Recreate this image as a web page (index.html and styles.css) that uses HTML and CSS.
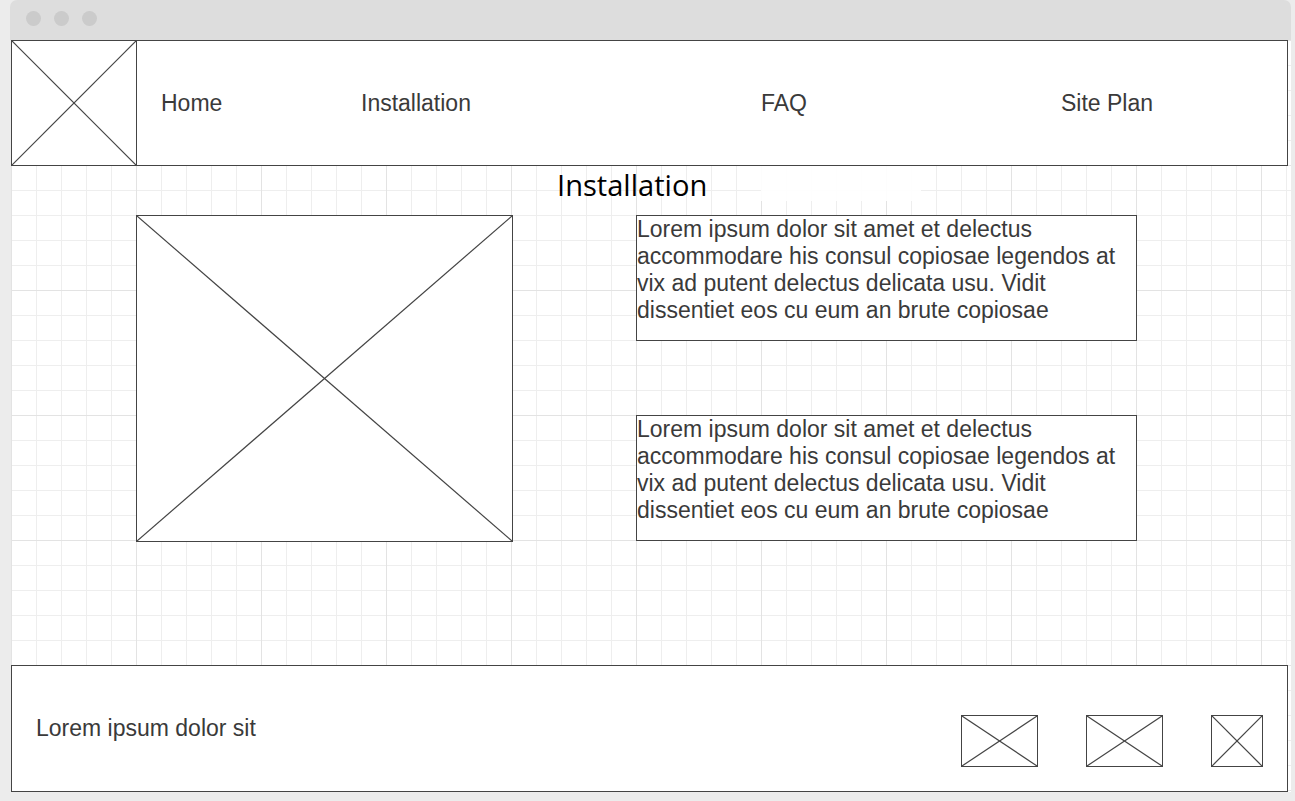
FILE: index.html
```html
<!DOCTYPE html>
<html>
<head>
<meta charset="utf-8">
<link rel="stylesheet" href="styles.css">
</head>
<body>
<div class="window">
  <div class="topbar">
    <span class="dot"></span><span class="dot"></span><span class="dot"></span>
  </div>
  <div class="canvas">
    <header class="header">
      <div class="logo">
        <svg class="xbox" viewBox="0 0 100 100" preserveAspectRatio="none"><line x1="0" y1="0" x2="100" y2="100"/><line x1="100" y1="0" x2="0" y2="100"/></svg>
      </div>
      <nav class="nav">
        <a class="nav-item nav-home">Home</a>
        <a class="nav-item nav-install">Installation</a>
        <a class="nav-item nav-faq">FAQ</a>
        <a class="nav-item nav-plan">Site Plan</a>
      </nav>
    </header>
    <main class="main">
      <div class="heading-row">
        <h1 class="heading">Installation</h1>
        <div class="heading-blank"></div>
      </div>
      <div class="content">
        <div class="image-box">
          <svg class="xbox" viewBox="0 0 100 100" preserveAspectRatio="none"><line x1="0" y1="0" x2="100" y2="100"/><line x1="100" y1="0" x2="0" y2="100"/></svg>
        </div>
        <div class="text-col">
          <div class="text-box"><p>Lorem ipsum dolor sit amet et delectus accommodare his consul copiosae legendos at vix ad putent delectus delicata usu. Vidit dissentiet eos cu eum an brute copiosae</p></div>
          <div class="text-box"><p>Lorem ipsum dolor sit amet et delectus accommodare his consul copiosae legendos at vix ad putent delectus delicata usu. Vidit dissentiet eos cu eum an brute copiosae</p></div>
        </div>
      </div>
    </main>
    <footer class="footer">
      <p class="footer-text">Lorem ipsum dolor sit</p>
      <div class="footer-icons">
        <div class="icon icon-wide"><svg class="xbox" viewBox="0 0 100 100" preserveAspectRatio="none"><line x1="0" y1="0" x2="100" y2="100"/><line x1="100" y1="0" x2="0" y2="100"/></svg></div>
        <div class="icon icon-wide"><svg class="xbox" viewBox="0 0 100 100" preserveAspectRatio="none"><line x1="0" y1="0" x2="100" y2="100"/><line x1="100" y1="0" x2="0" y2="100"/></svg></div>
        <div class="icon icon-square"><svg class="xbox" viewBox="0 0 100 100" preserveAspectRatio="none"><line x1="0" y1="0" x2="100" y2="100"/><line x1="100" y1="0" x2="0" y2="100"/></svg></div>
      </div>
    </footer>
  </div>
</div>
</body>
</html>
```
FILE: styles.css
```css
* { box-sizing: border-box; }
html, body { margin: 0; padding: 0; }
body {
  background: #ececec;
  width: 1295px;
  height: 801px;
  overflow: hidden;
  font-family: "Liberation Sans", Arial, sans-serif;
  color: #3a3a3a;
}
.window {
  margin-left: 10px;
  width: 1281px;
}
.topbar {
  height: 40px;
  background: #dddddd;
  border-radius: 7px 7px 0 0;
  display: flex;
  align-items: center;
  gap: 13px;
  padding-left: 16px;
  padding-bottom: 4px;
}
.dot {
  width: 15px;
  height: 15px;
  border-radius: 50%;
  background: #cbcbcb;
}
.canvas {
  margin-left: 1px;
  width: 1280px;
  height: 752px;
  background-color: #fff;
  background-image:
    linear-gradient(to right, #e3e3e3 1px, transparent 1px),
    linear-gradient(to bottom, #e3e3e3 1px, transparent 1px),
    linear-gradient(to right, #eeeeee 1px, transparent 1px),
    linear-gradient(to bottom, #eeeeee 1px, transparent 1px);
  background-size: 125px 125px, 125px 125px, 25px 25px, 25px 25px;
  display: flex;
  flex-direction: column;
}
.xbox {
  display: block;
  width: 100%;
  height: 100%;
}
.xbox line {
  stroke: #444;
  stroke-width: 1.2;
  vector-effect: non-scaling-stroke;
}
.header {
  width: 1277px;
  height: 126px;
  border: 1px solid #444;
  background: #fff;
  display: flex;
  flex-shrink: 0;
}
.logo {
  width: 126px;
  height: 126px;
  margin: -1px 0 0 -1px;
  border: 1px solid #444;
  flex-shrink: 0;
}
.nav {
  display: flex;
  align-items: center;
  padding-left: 24px;
  padding-top: 1px;
  font-size: 23px;
  line-height: 27px;
}
.nav-item { display: block; color: #3a3a3a; }
.nav-home { width: 200px; }
.nav-install { width: 400px; }
.nav-faq { width: 300px; }
.main {
  height: 499px;
  flex-shrink: 0;
}
.heading-row {
  height: 49px;
  display: flex;
  padding-left: 546px;
}
.heading {
  margin: 0;
  padding-top: 4px;
  font-family: "Open Sans", "Noto Sans", sans-serif;
  font-weight: 400;
  font-size: 29.1px;
  line-height: 30px;
  color: #000;
}
.heading-blank {
  margin-left: 54px;
  width: 160px;
  height: 35px;
  background: rgba(255,255,255,0.9);
}
.content {
  display: flex;
  padding-left: 125px;
  gap: 123px;
}
.image-box {
  width: 377px;
  height: 327px;
  border: 1px solid #444;
  background: #fff;
}
.text-col {
  display: flex;
  flex-direction: column;
  gap: 74px;
}
.text-box {
  width: 501px;
  height: 126px;
  border: 1px solid #444;
  background: #fff;
}
.text-box p {
  margin: 0;
  font-size: 23px;
  line-height: 27px;
  color: #3a3a3a;
}
.footer {
  width: 1277px;
  height: 127px;
  border: 1px solid #444;
  background: #fff;
  display: flex;
  justify-content: space-between;
  align-items: flex-start;
  padding: 49px 24px 0 24px;
  flex-shrink: 0;
}
.footer-text {
  margin: 0;
  font-size: 23px;
  line-height: 27px;
}
.footer-icons {
  display: flex;
  gap: 48px;
}
.icon {
  height: 52px;
  border: 1px solid #444;
}
.icon-wide { width: 77px; }
.icon-square { width: 52px; }
```
